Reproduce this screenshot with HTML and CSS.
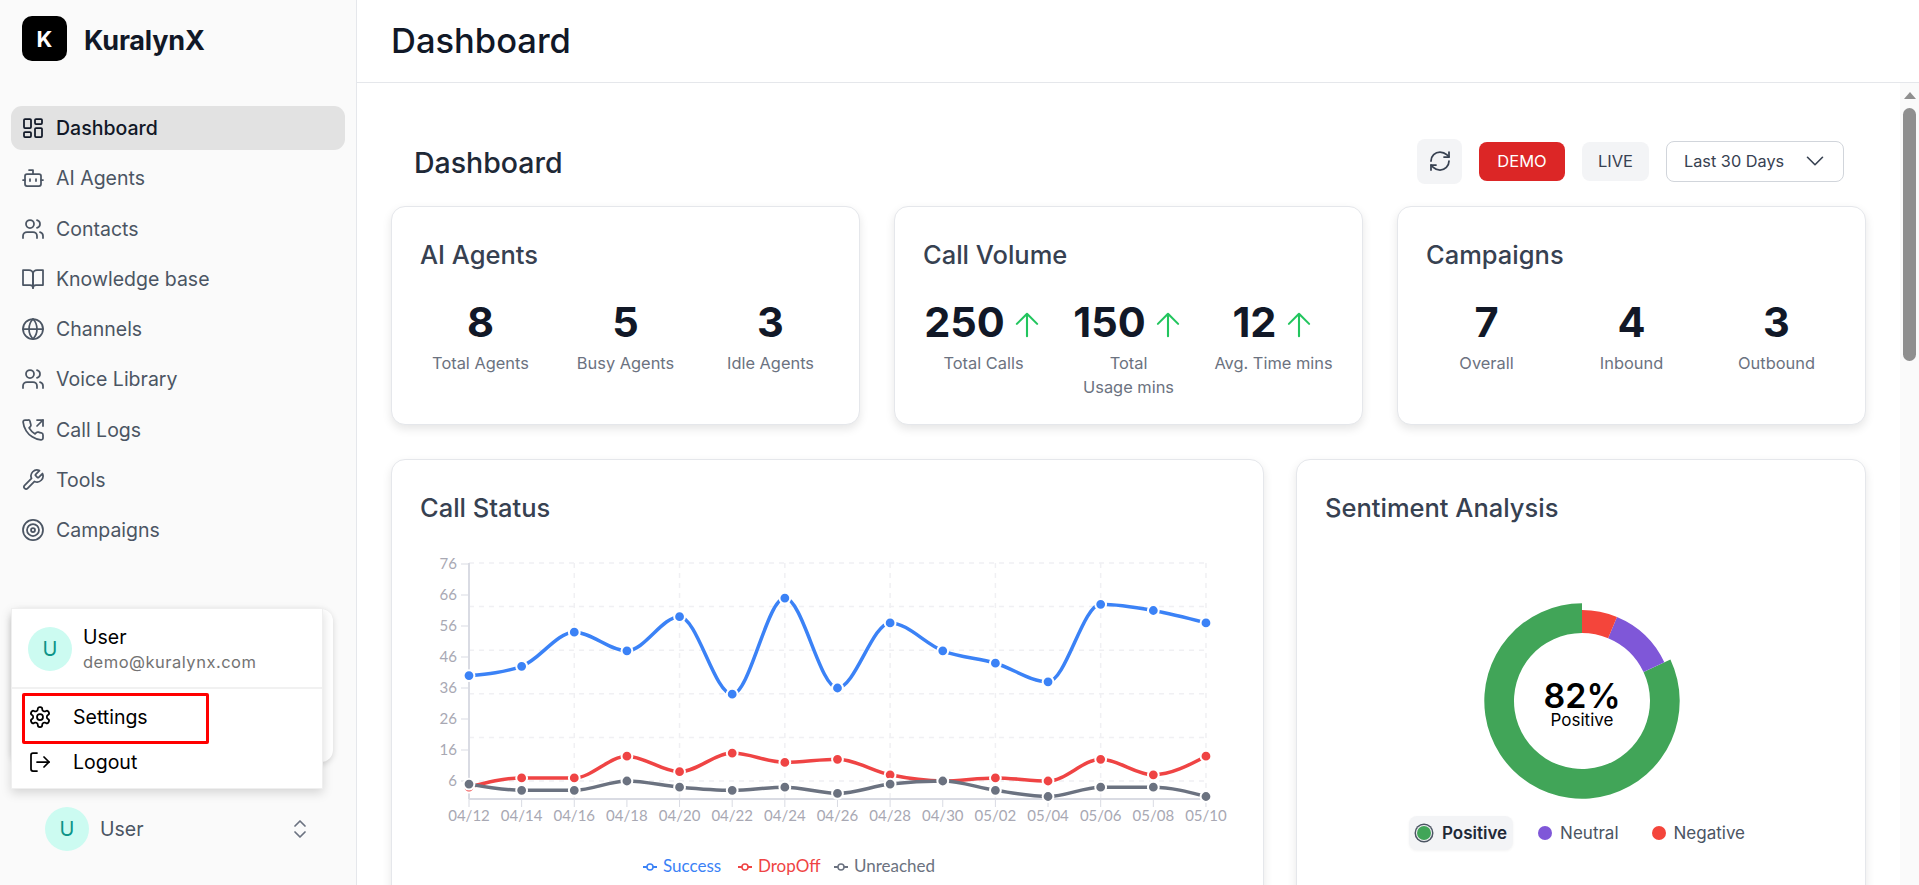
FILE: index.html
```html
<!DOCTYPE html>
<html lang="en">
<head>
  <meta charset="UTF-8">
  <meta name="viewport" content="width=device-width, initial-scale=1.0">
  <title>KuralynX - Dashboard</title>
  <link rel="stylesheet" href="styles.css">
</head>
<body>
  <!-- Icon sprite -->
  <svg class="sprite" xmlns="http://www.w3.org/2000/svg">
    <symbol id="i-dashboard" viewBox="0 0 24 24"><rect x="3" y="3" width="7" height="9" rx="1"/><rect x="14" y="3" width="7" height="5" rx="1"/><rect x="14" y="12" width="7" height="9" rx="1"/><rect x="3" y="16" width="7" height="5" rx="1"/></symbol>
    <symbol id="i-bot" viewBox="0 0 24 24"><path d="M12 8V4H8"/><rect x="4" y="8" width="16" height="12" rx="2"/><path d="M2 14h2"/><path d="M20 14h2"/><path d="M15 13v2"/><path d="M9 13v2"/></symbol>
    <symbol id="i-users" viewBox="0 0 24 24"><path d="M16 21v-2a4 4 0 0 0-4-4H6a4 4 0 0 0-4 4v2"/><circle cx="9" cy="7" r="4"/><path d="M22 21v-2a4 4 0 0 0-3-3.87"/><path d="M16 3.13a4 4 0 0 1 0 7.75"/></symbol>
    <symbol id="i-book" viewBox="0 0 24 24"><path d="M2 3h6a4 4 0 0 1 4 4v14a3 3 0 0 0-3-3H2z"/><path d="M22 3h-6a4 4 0 0 0-4 4v14a3 3 0 0 1 3-3h7z"/></symbol>
    <symbol id="i-globe" viewBox="0 0 24 24"><circle cx="12" cy="12" r="10"/><path d="M12 2a14.5 14.5 0 0 0 0 20 14.5 14.5 0 0 0 0-20"/><path d="M2 12h20"/></symbol>
    <symbol id="i-phone" viewBox="0 0 24 24"><polyline points="22 8 22 2 16 2"/><line x1="16" y1="8" x2="22" y2="2"/><path d="M22 16.92v3a2 2 0 0 1-2.18 2 19.79 19.79 0 0 1-8.63-3.07 19.5 19.5 0 0 1-6-6 19.79 19.79 0 0 1-3.07-8.67A2 2 0 0 1 4.11 2h3a2 2 0 0 1 2 1.72 12.84 12.84 0 0 0 .7 2.81 2 2 0 0 1-.45 2.11L8.09 9.91a16 16 0 0 0 6 6l1.27-1.27a2 2 0 0 1 2.11-.45 12.84 12.84 0 0 0 2.81.7A2 2 0 0 1 22 16.92z"/></symbol>
    <symbol id="i-wrench" viewBox="0 0 24 24"><path d="M14.7 6.3a1 1 0 0 0 0 1.4l1.6 1.6a1 1 0 0 0 1.4 0l3.77-3.77a6 6 0 0 1-7.94 7.94l-6.91 6.91a2.12 2.12 0 0 1-3-3l6.91-6.91a6 6 0 0 1 7.94-7.94l-3.76 3.76z"/></symbol>
    <symbol id="i-target" viewBox="0 0 24 24"><circle cx="12" cy="12" r="10"/><circle cx="12" cy="12" r="6"/><circle cx="12" cy="12" r="2"/></symbol>
    <symbol id="i-settings" viewBox="0 0 24 24"><path d="M12.22 2h-.44a2 2 0 0 0-2 2v.18a2 2 0 0 1-1 1.73l-.43.25a2 2 0 0 1-2 0l-.15-.08a2 2 0 0 0-2.73.73l-.22.38a2 2 0 0 0 .73 2.73l.15.1a2 2 0 0 1 1 1.72v.51a2 2 0 0 1-1 1.74l-.15.09a2 2 0 0 0-.73 2.73l.22.38a2 2 0 0 0 2.73.73l.15-.08a2 2 0 0 1 2 0l.43.25a2 2 0 0 1 1 1.73V20a2 2 0 0 0 2 2h.44a2 2 0 0 0 2-2v-.18a2 2 0 0 1 1-1.73l.43-.25a2 2 0 0 1 2 0l.15.08a2 2 0 0 0 2.73-.73l.22-.39a2 2 0 0 0-.73-2.73l-.15-.08a2 2 0 0 1-1-1.74v-.5a2 2 0 0 1 1-1.74l.15-.09a2 2 0 0 0 .73-2.73l-.22-.38a2 2 0 0 0-2.73-.73l-.15.08a2 2 0 0 1-2 0l-.43-.25a2 2 0 0 1-1-1.73V4a2 2 0 0 0-2-2z"/><circle cx="12" cy="12" r="3"/></symbol>
    <symbol id="i-logout" viewBox="0 0 24 24"><path d="M9 21H5a2 2 0 0 1-2-2V5a2 2 0 0 1 2-2h4"/><polyline points="16 17 21 12 16 7"/><line x1="21" y1="12" x2="9" y2="12"/></symbol>
    <symbol id="i-updown" viewBox="0 0 24 24"><path d="m7 15 5 5 5-5"/><path d="m7 9 5-5 5 5"/></symbol>
    <symbol id="i-refresh" viewBox="0 0 24 24"><path d="M3 12a9 9 0 0 1 9-9 9.75 9.75 0 0 1 6.74 2.74L21 8"/><path d="M21 3v5h-5"/><path d="M21 12a9 9 0 0 1-9 9 9.75 9.75 0 0 1-6.74-2.74L3 16"/><path d="M8 16H3v5"/></symbol>
    <symbol id="i-down" viewBox="0 0 24 24"><path d="m6 9 6 6 6-6"/></symbol>
    <symbol id="i-up" viewBox="0 0 24 24"><path d="M12 19.5v-15m0 0l-6.75 6.75M12 4.5l6.75 6.75"/></symbol>
  </svg>

  <!-- Sidebar -->
  <aside class="sidebar">
    <div class="brand">
      <div class="brand-logo">K</div>
      <div class="brand-name">KuralynX</div>
    </div>
    <nav class="nav">
      <a class="nav-item active"><svg class="icon"><use href="#i-dashboard"/></svg>Dashboard</a>
      <a class="nav-item"><svg class="icon"><use href="#i-bot"/></svg>AI Agents</a>
      <a class="nav-item"><svg class="icon"><use href="#i-users"/></svg>Contacts</a>
      <a class="nav-item"><svg class="icon"><use href="#i-book"/></svg>Knowledge base</a>
      <a class="nav-item"><svg class="icon"><use href="#i-globe"/></svg>Channels</a>
      <a class="nav-item"><svg class="icon"><use href="#i-users"/></svg>Voice Library</a>
      <a class="nav-item"><svg class="icon"><use href="#i-phone"/></svg>Call Logs</a>
      <a class="nav-item"><svg class="icon"><use href="#i-wrench"/></svg>Tools</a>
      <a class="nav-item"><svg class="icon"><use href="#i-target"/></svg>Campaigns</a>
    </nav>
    <div class="user-row">
      <div class="avatar">U</div>
      <div class="user-row-name">User</div>
      <svg class="icon updown"><use href="#i-updown"/></svg>
    </div>

    <!-- User menu, open over the sidebar -->
    <div class="menu-back"></div>
    <div class="menu">
      <div class="menu-head">
        <div class="avatar">U</div>
        <div>
          <div class="menu-name">User</div>
          <div class="menu-email">demo@kuralynx.com</div>
        </div>
      </div>
      <a class="menu-item"><svg class="icon"><use href="#i-settings"/></svg>Settings</a>
      <a class="menu-item"><svg class="icon"><use href="#i-logout"/></svg>Logout</a>
    </div>
    <div class="highlight"></div>
  </aside>

  <div class="main">
    <header class="topbar"><h1>Dashboard</h1></header>
    <div class="body-row">
      <main class="content">
        <div class="title-row">
          <h2>Dashboard</h2>
          <div class="controls">
            <button class="btn-icon"><svg class="icon"><use href="#i-refresh"/></svg></button>
            <button class="btn btn-demo">DEMO</button>
            <button class="btn btn-live">LIVE</button>
            <button class="btn-select">Last 30 Days<svg class="icon"><use href="#i-down"/></svg></button>
          </div>
        </div>

        <section class="stats-row">
          <div class="card">
            <h3>AI Agents</h3>
            <div class="stats">
              <div class="stat"><div class="stat-num">8</div><div class="stat-label">Total Agents</div></div>
              <div class="stat"><div class="stat-num">5</div><div class="stat-label">Busy Agents</div></div>
              <div class="stat"><div class="stat-num">3</div><div class="stat-label">Idle Agents</div></div>
            </div>
          </div>
          <div class="card">
            <h3>Call Volume</h3>
            <div class="stats">
              <div class="stat"><div class="stat-num">250<svg class="icon arrow"><use href="#i-up"/></svg></div><div class="stat-label">Total Calls</div></div>
              <div class="stat"><div class="stat-num">150<svg class="icon arrow"><use href="#i-up"/></svg></div><div class="stat-label">Total<br>Usage mins</div></div>
              <div class="stat"><div class="stat-num">12<svg class="icon arrow"><use href="#i-up"/></svg></div><div class="stat-label">Avg. Time mins</div></div>
            </div>
          </div>
          <div class="card">
            <h3>Campaigns</h3>
            <div class="stats">
              <div class="stat"><div class="stat-num">7</div><div class="stat-label">Overall</div></div>
              <div class="stat"><div class="stat-num">4</div><div class="stat-label">Inbound</div></div>
              <div class="stat"><div class="stat-num">3</div><div class="stat-label">Outbound</div></div>
            </div>
          </div>
        </section>

        <section class="charts-row">
          <div class="card chart-card">
            <h3>Call Status</h3>
            <svg id="lineChart" class="line-chart" viewBox="0 0 815 350"></svg>
          </div>
          <div class="card chart-card">
            <h3>Sentiment Analysis</h3>
            <div class="donut-wrap">
              <svg id="donut" class="donut" viewBox="0 0 200 200"></svg>
              <div class="donut-text">
                <div class="donut-value">82%</div>
                <div class="donut-label">Positive</div>
              </div>
            </div>
            <div class="donut-legend">
              <div class="legend-item selected"><span class="dot dot-green"></span>Positive</div>
              <div class="legend-item"><span class="dot dot-purple"></span>Neutral</div>
              <div class="legend-item"><span class="dot dot-red"></span>Negative</div>
            </div>
          </div>
        </section>
      </main>
      <div class="scrollbar">
        <div class="scroll-arrow"></div>
        <div class="scroll-thumb"></div>
      </div>
    </div>
  </div>

  <script src="chart.js"></script>
</body>
</html>
```

FILE: styles.css
```css
* {
  box-sizing: border-box;
}

html, body {
  height: 100%;
}

body {
  margin: 0;
  display: flex;
  overflow: hidden;
  background: #fff;
  color: #111827;
  font-family: "Inter", "Noto Sans", sans-serif;
}

h1, h2, h3 {
  margin: 0;
}

.sprite {
  display: none;
}

.icon {
  width: 24px;
  height: 24px;
  flex: none;
  fill: none;
  stroke: currentColor;
  stroke-width: 1.75;
  stroke-linecap: round;
  stroke-linejoin: round;
}

/* Sidebar */
.sidebar {
  position: relative;
  width: 357px;
  flex: none;
  display: flex;
  flex-direction: column;
  background: #fafafa;
  border-right: 1px solid #e5e7eb;
}

.brand {
  display: flex;
  align-items: center;
  gap: 17px;
  padding: 16px 22px 0;
}

.brand-logo {
  width: 45px;
  height: 45px;
  display: flex;
  align-items: center;
  justify-content: center;
  background: #000;
  color: #fff;
  border-radius: 10px;
  font-size: 22px;
  font-weight: 700;
}

.brand-name {
  padding-top: 3px;
  font-size: 27px;
  font-weight: 700;
  letter-spacing: -0.2px;
}

.nav {
  display: flex;
  flex-direction: column;
  gap: 6.3px;
  margin-top: 45px;
  padding: 0 11px;
}

.nav-item {
  height: 44px;
  display: flex;
  align-items: center;
  gap: 11px;
  padding: 0 10px;
  border-radius: 11px;
  color: #4b5563;
  font-size: 19.5px;
}

.nav-item.active {
  background: #e2e2e2;
  color: #111827;
  font-weight: 500;
}

.user-row {
  margin-top: auto;
  margin-bottom: 34px;
  padding: 0 44px 0 45px;
  display: flex;
  align-items: center;
  gap: 11px;
  color: #4b5563;
  font-size: 19.5px;
}

.user-row-name {
  flex: 1;
}

.updown {
  color: #6b7280;
}

.avatar {
  width: 44px;
  height: 44px;
  flex: none;
  display: flex;
  align-items: center;
  justify-content: center;
  border-radius: 50%;
  background: #ccfbf1;
  color: #0d9488;
  font-size: 20px;
}

/* User menu */
.menu-back {
  position: absolute;
  left: 11px;
  top: 609px;
  width: 322px;
  height: 153px;
  background: #fff;
  border-radius: 12px;
  box-shadow: 0 2px 6px rgba(0, 0, 0, 0.15);
}

.menu {
  position: absolute;
  left: 11px;
  top: 608px;
  width: 312px;
  height: 181px;
  background: #fff;
  border: 1px solid #efefef;
  box-shadow: 0 4px 10px rgba(0, 0, 0, 0.15);
}

.menu-head {
  height: 80px;
  margin-bottom: 5px;
  display: flex;
  align-items: center;
  gap: 11px;
  padding: 2px 16px 0;
  border-bottom: 2px solid #f1f1f1;
}

.menu-name {
  font-size: 19.5px;
  color: #000;
  line-height: 25px;
}

.menu-email {
  font-size: 16.5px;
  color: #737373;
  line-height: 24px;
  letter-spacing: 0.5px;
}

.menu-item {
  height: 45px;
  display: flex;
  align-items: center;
  gap: 21px;
  padding: 0 16px;
  font-size: 19.5px;
  color: #000;
}

.highlight {
  position: absolute;
  left: 22px;
  top: 693px;
  width: 187px;
  height: 51px;
  border: 3.5px solid #f00;
  border-radius: 2px;
}

/* Main */
.main {
  flex: 1;
  min-width: 0;
  display: flex;
  flex-direction: column;
}

.topbar {
  height: 83px;
  flex: none;
  display: flex;
  align-items: center;
  padding: 0 0 2px 34px;
  border-bottom: 1px solid #e5e7eb;
}

.topbar h1 {
  font-size: 34.5px;
  font-weight: 500;
  color: #111827;
}

.body-row {
  flex: 1;
  min-height: 0;
  display: flex;
}

.content {
  flex: 1;
  min-width: 0;
  overflow: hidden;
  padding: 55px 34px 0 34px;
}

.title-row {
  height: 46px;
  display: flex;
  align-items: center;
  justify-content: space-between;
  padding: 0 22px 0 23px;
}

.title-row h2 {
  margin-top: 2px;
  font-size: 28.5px;
  font-weight: 500;
  color: #1f2937;
}

.controls {
  display: flex;
  align-items: center;
  gap: 17px;
}

.btn-icon {
  width: 45px;
  height: 45px;
  display: flex;
  align-items: center;
  justify-content: center;
  border: 0;
  border-radius: 8px;
  background: #f3f4f6;
  color: #374151;
  padding: 0;
}

.btn {
  height: 39px;
  border: 0;
  border-radius: 8px;
  font-family: inherit;
  font-size: 16.5px;
}

.btn-demo {
  width: 86px;
  background: #dc2626;
  color: #fff;
}

.btn-live {
  width: 67px;
  background: #f3f4f6;
  color: #374151;
}

.btn-select {
  width: 178px;
  height: 41px;
  display: flex;
  align-items: center;
  justify-content: space-between;
  padding: 0 13px 0 17px;
  background: #fff;
  border: 1px solid #d1d5db;
  border-radius: 8px;
  color: #374151;
  font-family: inherit;
  font-size: 16.3px;
}

.btn-select .icon {
  width: 30px;
  height: 30px;
  stroke-width: 1.3;
}

/* Cards */
.card {
  background: #fff;
  border: 1px solid #e5e7eb;
  border-radius: 14px;
  box-shadow: 0 4px 10px rgba(0, 0, 0, 0.1);
  padding: 28px 28px 25.5px;
}

.card h3 {
  font-size: 25.5px;
  line-height: 40px;
  font-weight: 500;
  color: #374151;
}

.stats-row {
  margin-top: 22px;
  display: grid;
  grid-template-columns: repeat(3, 1fr);
  gap: 34px;
}

.stats {
  margin-top: 22px;
  display: grid;
  grid-template-columns: repeat(3, 1fr);
  gap: 24px;
}

.stat {
  min-width: 0;
  text-align: center;
}

.stat-num {
  display: flex;
  align-items: center;
  justify-content: center;
  gap: 4px;
  height: 50px;
  font-size: 41.5px;
  font-weight: 700;
  color: #111827;
}

.arrow {
  width: 36px;
  height: 36px;
  margin: 6px -2px 0 0;
  color: #22c55e;
  stroke-width: 1.4;
}

.stat-label {
  margin-top: 3.5px;
  font-size: 16.4px;
  line-height: 24px;
  color: #6b7280;
}

.charts-row {
  margin-top: 34px;
  display: grid;
  grid-template-columns: 873px 1fr;
  gap: 32px;
}

.chart-card {
  height: 500px;
}

.line-chart {
  display: block;
  width: 815px;
  height: 350px;
  margin-top: 23.5px;
}

.axis-text {
  font-family: "Lato", sans-serif;
  font-size: 15px;
  fill: #a8a8b3;
}

.legend-text {
  font-family: "Lato", sans-serif;
  font-size: 17px;
}

/* Donut */
.donut-wrap {
  position: relative;
  width: 200px;
  height: 200px;
  margin: 73px auto 0;
  left: 1px;
}

.donut {
  display: block;
  width: 200px;
  height: 200px;
}

.donut-text {
  position: absolute;
  inset: 0;
  padding-top: 8px;
  display: flex;
  flex-direction: column;
  align-items: center;
  justify-content: center;
  color: #000;
}

.donut-value {
  font-size: 34px;
  font-weight: 600;
  line-height: 30px;
}

.donut-label {
  font-size: 17px;
  line-height: 19px;
}

.donut-legend {
  margin-top: 15px;
  display: flex;
  justify-content: center;
  gap: 17px;
}

.legend-item {
  height: 34px;
  display: flex;
  align-items: center;
  gap: 8px;
  padding: 0 8px;
  border-radius: 8px;
  font-size: 17px;
  color: #4b5563;
}

.legend-item.selected {
  background: #f3f4f6;
  color: #1f2937;
  font-weight: 600;
  padding: 0 6px 0 5px;
  box-shadow: 0 1px 3px rgba(0, 0, 0, 0.05);
}

.dot {
  width: 14px;
  height: 14px;
  border-radius: 50%;
}

.dot-green {
  background: #41a558;
  box-shadow: 0 0 0 1px #f3f4f6, 0 0 0 2.5px #4b5563;
  margin: 0 3px;
}

.dot-purple {
  background: #7f57d8;
}

.dot-red {
  background: #f4453b;
}

/* Scrollbar */
.scrollbar {
  width: 19px;
  flex: none;
  display: flex;
  flex-direction: column;
  align-items: center;
  background: #fafafa;
  padding-top: 9px;
}

.scroll-arrow {
  width: 0;
  height: 0;
  border-left: 6.5px solid transparent;
  border-right: 6.5px solid transparent;
  border-bottom: 7px solid #8f8f8f;
}

.scroll-thumb {
  width: 13px;
  height: 253px;
  margin-top: 9px;
  background: #8f8f8f;
  border-radius: 7px;
}
```

FILE: chart.js
```js
// Call Status line chart and Sentiment donut
const SVG_NS = 'http://www.w3.org/2000/svg';

const labels = ['04/12', '04/14', '04/16', '04/18', '04/20', '04/22', '04/24', '04/26', '04/28', '04/30', '05/02', '05/04', '05/06', '05/08', '05/10'];
const series = [
  { name: 'Success', color: '#3b82f6', data: [40, 43, 54, 48, 59, 34, 65, 36, 57, 48, 44, 38, 63, 61, 57] },
  { name: 'DropOff', color: '#ef4444', data: [4, 7, 7, 14, 9, 15, 12, 13, 8, 6, 7, 6, 13, 8, 14] },
  { name: 'Unreached', color: '#6b7280', data: [5, 3, 3, 6, 4, 3, 4, 2, 5, 6, 3, 1, 4, 4, 1] }
];

const chart = document.getElementById('lineChart');
const xPos = i => 49 + 52.64 * i;
const yPos = v => 229 - (v - 6) * 3.1;

function add(parent, tag, attrs, text) {
  const el = document.createElementNS(SVG_NS, tag);
  for (const key in attrs) el.setAttribute(key, attrs[key]);
  if (text) el.textContent = text;
  parent.appendChild(el);
  return el;
}

// monotone cubic curve, keeps peaks on the points
function curvePath(pts) {
  const n = pts.length;
  const sign = x => (x < 0 ? -1 : 1);
  const slopes = pts.slice(0, -1).map((p, i) => (pts[i + 1][1] - p[1]) / (pts[i + 1][0] - p[0]));
  const t = pts.map((p, i) => {
    if (i === 0 || i === n - 1) return 0;
    const s0 = slopes[i - 1], s1 = slopes[i];
    return (sign(s0) + sign(s1)) * Math.min(Math.abs(s0), Math.abs(s1), 0.5 * Math.abs((s0 + s1) / 2));
  });
  t[0] = (3 * slopes[0] - t[1]) / 2;
  t[n - 1] = (3 * slopes[n - 2] - t[n - 2]) / 2;
  let d = `M${pts[0][0]} ${pts[0][1]}`;
  for (let i = 0; i < n - 1; i++) {
    const dx = (pts[i + 1][0] - pts[i][0]) / 3;
    d += `C${pts[i][0] + dx} ${pts[i][1] + dx * t[i]} ${pts[i + 1][0] - dx} ${pts[i + 1][1] - dx * t[i + 1]} ${pts[i + 1][0]} ${pts[i + 1][1]}`;
  }
  return d;
}

// grid
for (let i = 0; i < 6; i++) {
  const y = 11 + i * 43.6;
  add(chart, 'line', { x1: 49, x2: 786, y1: y, y2: y, stroke: '#f0f0f3', 'stroke-width': 1.5, 'stroke-dasharray': '5 5' });
}
for (let i = 2; i < 15; i += 2) {
  add(chart, 'line', { x1: xPos(i), x2: xPos(i), y1: 11, y2: 247, stroke: '#f0f0f3', 'stroke-width': 1.5, 'stroke-dasharray': '5 5' });
}

// axes
add(chart, 'line', { x1: 49, x2: 49, y1: 11, y2: 247, stroke: '#d9dbe3', 'stroke-width': 2 });
add(chart, 'line', { x1: 49, x2: 786, y1: 247, y2: 247, stroke: '#d9dbe3', 'stroke-width': 2 });
for (let v = 6; v <= 76; v += 10) {
  add(chart, 'line', { x1: 41, x2: 49, y1: yPos(v), y2: yPos(v), stroke: '#d9dbe3', 'stroke-width': 1 });
  add(chart, 'text', { x: 37, y: yPos(v) + 5, 'text-anchor': 'end', class: 'axis-text' }, String(v));
}
labels.forEach((label, i) => {
  add(chart, 'line', { x1: xPos(i), x2: xPos(i), y1: 247, y2: 255, stroke: '#d9dbe3', 'stroke-width': 1 });
  add(chart, 'text', { x: xPos(i), y: 269, 'text-anchor': 'middle', class: 'axis-text' }, label);
});

// lines
series.forEach(s => {
  const pts = s.data.map((v, i) => [xPos(i), yPos(v)]);
  add(chart, 'path', { d: curvePath(pts), fill: 'none', stroke: s.color, 'stroke-width': 3.5 });
  pts.forEach(p => add(chart, 'circle', { cx: p[0], cy: p[1], r: 5.4, fill: s.color, stroke: '#fff', 'stroke-width': 2 }));
});

// legend
const legendX = [223, 318, 414];
series.forEach((s, i) => {
  const x = legendX[i];
  add(chart, 'line', { x1: x, x2: x + 14, y1: 315, y2: 315, stroke: s.color, 'stroke-width': 2 });
  add(chart, 'circle', { cx: x + 7, cy: 315, r: 3, fill: '#fff', stroke: s.color, 'stroke-width': 1.5 });
  add(chart, 'text', { x: x + 20, y: 320, class: 'legend-text', fill: s.color }, s.name);
});

// donut, start and end angle in degrees from the top
function arcPath(a0, a1, outer, inner) {
  const pt = (a, r) => {
    const rad = (a - 90) * Math.PI / 180;
    return `${100 + r * Math.cos(rad)} ${100 + r * Math.sin(rad)}`;
  };
  const large = a1 - a0 > 180 ? 1 : 0;
  return `M${pt(a0, outer)}A${outer} ${outer} 0 ${large} 1 ${pt(a1, outer)}L${pt(a1, inner)}A${inner} ${inner} 0 ${large} 0 ${pt(a0, inner)}Z`;
}

const donut = document.getElementById('donut');
add(donut, 'path', { d: arcPath(64.8, 360, 97.7, 68), fill: '#41a558' });
add(donut, 'path', { d: arcPath(22.6, 64.8, 91, 68), fill: '#7f57d8' });
add(donut, 'path', { d: arcPath(0, 22.6, 91, 68), fill: '#f4453b' });
```
